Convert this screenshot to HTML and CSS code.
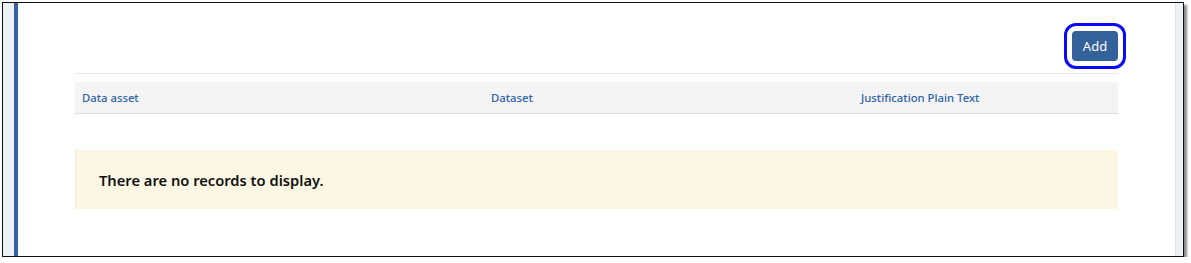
FILE: index.html
```html
<!DOCTYPE html>
<html lang="en">
<head>
<meta charset="utf-8">
<title>Records</title>
<link rel="stylesheet" href="styles.css">
</head>
<body>
<div class="frame">
  <div class="strip-left"></div>
  <div class="accent"></div>
  <main class="content">
    <div class="toolbar">
      <button class="btn-add" type="button">Add</button>
    </div>
    <table class="grid">
      <thead>
        <tr>
          <th class="col-asset">Data asset</th>
          <th class="col-dataset">Dataset</th>
          <th class="col-just">Justification Plain Text</th>
        </tr>
      </thead>
    </table>
    <div class="alert">There are no records to display.</div>
  </main>
  <div class="strip-right"></div>
</div>
</body>
</html>
```
FILE: styles.css
```css
html, body {
  margin: 0;
  padding: 0;
  background: #ffffff;
}
body {
  font-family: "Noto Sans", "Open Sans", "Liberation Sans", sans-serif;
}
.frame {
  margin: 2px 0 0 2px;
  width: 1180px;
  height: 253px;
  border: 1px solid #111;
  box-shadow: 3px 3px 2px rgba(0, 0, 0, 0.45);
  display: flex;
  background: #fff;
  box-sizing: content-box;
}
.strip-left {
  width: 11px;
  background: #eef2f7;
  flex: none;
}
.accent {
  width: 4px;
  background: #3463a0;
  flex: none;
}
.content {
  flex: 1;
  padding: 28px 57px 0 57px;
}
.strip-right {
  width: 7px;
  flex: none;
  background: #eef2f7;
  border-left: 1px solid #dde3ea;
}
.toolbar {
  display: flex;
  justify-content: flex-end;
  padding-bottom: 12px;
  border-bottom: 1px solid #e8e8e8;
}
.btn-add {
  width: 46px;
  height: 30px;
  border: none;
  border-radius: 4px;
  background: #336199;
  color: #fff;
  font-family: inherit;
  font-size: 13px;
  padding: 0;
  outline: 3px solid #0a0af5;
  outline-offset: 5px;
}
.grid {
  width: 100%;
  margin-top: 8px;
  border-collapse: collapse;
}
.grid th {
  height: 31px;
  padding: 0 7px;
  background: #f4f4f4;
  border-bottom: 1px solid #dcdcdc;
  text-align: left;
  font-weight: 500;
  font-size: 11.3px;
  color: #2f63a6;
}
.col-asset { width: 395px; }
.col-dataset { width: 356px; }
.alert {
  margin-top: 36px;
  height: 59px;
  box-sizing: border-box;
  padding-left: 23px;
  display: flex;
  align-items: center;
  background: #fcf7e4;
  border-left: 1px solid #f6ead0;
  font-size: 14.7px;
  font-weight: 600;
  color: #111;
}
```
